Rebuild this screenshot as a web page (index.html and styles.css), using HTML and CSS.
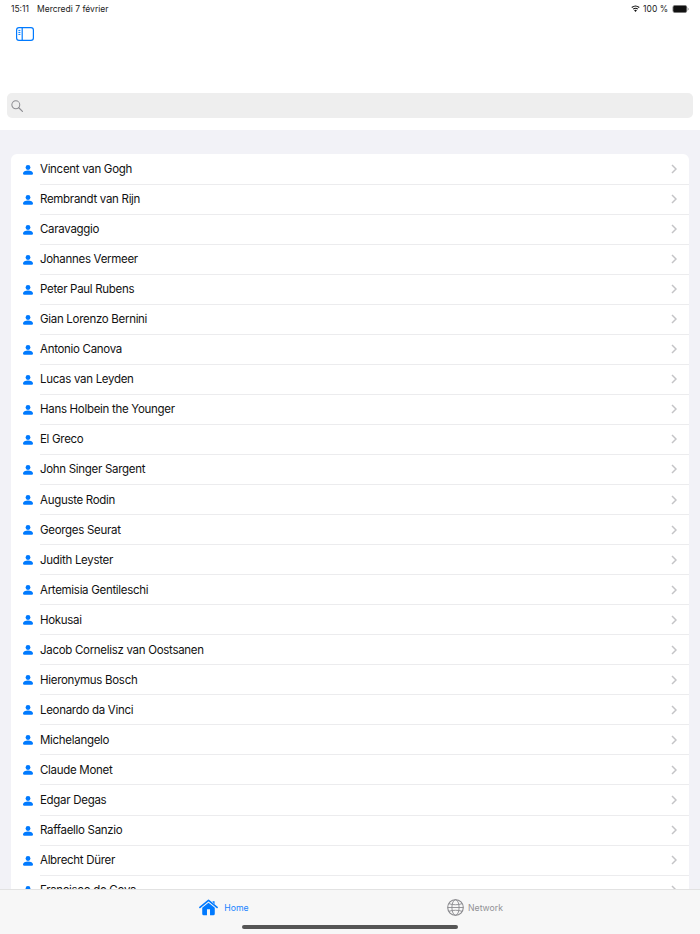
FILE: index.html
```html
<!DOCTYPE html>
<html lang="fr">
<head>
<meta charset="utf-8">
<title>Home</title>
<link rel="stylesheet" href="styles.css">
</head>
<body>
<div class="page">
  <header class="top">
    <div class="status">
      <div class="status-left"><span>15:11</span><span>Mercredi 7 février</span></div>
      <div class="status-right">
        <svg class="wifi" viewBox="0 0 12 9" width="9" height="7"><path d="M6 9 4.1 6.8a3 3 0 0 1 3.8 0Z" fill="#111"/><path d="M2.9 5.4a5 5 0 0 1 6.2 0M1 3.2a8 8 0 0 1 10 0" fill="none" stroke="#111" stroke-width="1.5"/></svg>
        <span>100 %</span>
        <svg class="battery" viewBox="0 0 19 9" width="18" height="8"><rect x=".5" y=".5" width="15.5" height="8" rx="2" fill="#111" stroke="#777"/><path d="M17 3v3a1.6 1.6 0 0 0 1.3-1.5A1.6 1.6 0 0 0 17 3Z" fill="#999"/></svg>
      </div>
    </div>
    <div class="nav">
      <svg class="sidebar-icon" viewBox="0 0 18 14" width="18" height="14" fill="none" stroke="#007aff"><rect x=".6" y=".6" width="16.8" height="12.8" rx="2.4" stroke-width="1.2"/><path d="M6.2.6v12.8" stroke-width="1.2"/><path d="M2.4 3.4h2M2.4 5.4h2M2.4 7.4h2" stroke-width="1"/></svg>
    </div>
    <div class="search">
      <svg viewBox="0 0 13 13" width="12" height="12" fill="none" stroke="#8e8e93" stroke-width="1.1"><circle cx="5.2" cy="5.2" r="4.3"/><path d="m8.4 8.4 4 4" stroke-width="1.3" stroke-linecap="round"/></svg>
    </div>
  </header>
  <main class="content">
    <ul class="list" id="list"></ul>
  </main>
  <nav class="tabbar">
    <div class="tab tab-active">
      <svg viewBox="0 0 20 17" width="19" height="17"><path d="M1 8.4 10 1l9 7.4" fill="none" stroke="#007aff" stroke-width="1.7" stroke-linecap="round" stroke-linejoin="round"/><path d="M14 1.8h2.4v3.6" fill="#007aff"/><path fill-rule="evenodd" d="M10 3.4 3.4 8.8V15a1.6 1.6 0 0 0 1.6 1.6h10a1.6 1.6 0 0 0 1.6-1.6V8.8ZM8.4 10.4h3.2v6.2H8.4Z" fill="#007aff"/></svg>
      <span>Home</span>
    </div>
    <div class="tab tab-network">
      <svg viewBox="0 0 17 17" width="17" height="17" fill="none" stroke="#8a8a8e" stroke-width=".9"><circle cx="8.5" cy="8.5" r="7.8" stroke-width="1.1"/><ellipse cx="8.5" cy="8.5" rx="3.6" ry="7.8"/><path d="M2 4.7c4 1.4 9 1.4 13 0M.8 8.5h15.4M2 12.3c4-1.4 9-1.4 13 0"/></svg>
      <span>Network</span>
    </div>
    <div class="home-indicator"></div>
  </nav>
</div>
<script src="app.js"></script>
</body>
</html>
```
FILE: app.js
```js
const names = ["Vincent van Gogh","Rembrandt van Rijn","Caravaggio","Johannes Vermeer","Peter Paul Rubens","Gian Lorenzo Bernini","Antonio Canova","Lucas van Leyden","Hans Holbein the Younger","El Greco","John Singer Sargent","Auguste Rodin","Georges Seurat","Judith Leyster","Artemisia Gentileschi","Hokusai","Jacob Cornelisz van Oostsanen","Hieronymus Bosch","Leonardo da Vinci","Michelangelo","Claude Monet","Edgar Degas","Raffaello Sanzio","Albrecht Dürer","Francisco de Goya"];
document.getElementById("list").innerHTML = names.map(n => `<li class="row">
  <svg class="person" viewBox="0 0 10 10" width="10" height="10"><circle cx="5" cy="2.5" r="2.4" fill="#007aff"/><path d="M0 8.6C0 6.6 2.2 5.6 5 5.6s5 1 5 3c0 .8-.5 1.2-1.2 1.2H1.2C.5 9.8 0 9.4 0 8.6Z" fill="#007aff"/></svg>
  <div class="row-main"><span class="name">${n}</span><svg class="chev" viewBox="0 0 6 10" width="6" height="10" fill="none" stroke="#c4c4c7" stroke-width="1.5"><path d="m1 1 4 4-4 4"/></svg></div>
</li>`).join("");
```
FILE: styles.css
```css
* { box-sizing: border-box; }
html, body { margin: 0; padding: 0; }
body { font-family: Inter, "Liberation Sans", sans-serif; color: #111; background: #fff; }
.page { position: relative; width: 700px; height: 934px; overflow: hidden; background: #f2f2f7; display: flex; flex-direction: column; }
.top { background: #fff; height: 130px; padding: 0 7px; flex: none; }
.status { height: 17px; margin: 0 3px 0 4px; display: flex; justify-content: space-between; align-items: center; font-size: 8.5px; color: #222; }
.status-left { display: flex; gap: 8px; }
.status-right { display: flex; align-items: center; gap: 3px; }
.battery { margin-left: 1px; }
.nav { height: 34px; padding: 10px 0 0 9px; }
.sidebar-icon { display: block; }
.search { margin-top: 42px; height: 25px; border-radius: 5px; background: #eeeeee; display: flex; align-items: center; padding-left: 4px; }
.content { padding: 24px 11px 0; flex: none; }
.list { list-style: none; margin: 0; padding: .5px 0 0; background: #fff; border-radius: 6px 6px 0 0; }
.row { height: 30.05px; display: flex; align-items: center; padding-left: 12px; gap: 7px; }
.row-main { flex: 1; height: 100%; display: flex; align-items: center; justify-content: space-between; padding-right: 12px; border-bottom: 1px solid #ececee; }
.name { font-size: 11.5px; letter-spacing: -.3px; color: #111; }
.chev { display: block; }
.tabbar { position: absolute; left: 0; right: 0; bottom: 0; height: 45px; padding-right: 1px; background: #f7f7f7; border-top: 1px solid #e2e2e2; display: flex; justify-content: center; }
.tab { width: 251px; display: flex; justify-content: center; align-items: center; gap: 6px; font-size: 8.7px; color: #929296; padding-bottom: 9px; }
.tab-network { gap: 4px; }
.tab-active { color: #1a84ff; }
.home-indicator { position: absolute; left: 242px; bottom: 5px; width: 216px; height: 4px; border-radius: 2px; background: #555; }
```
